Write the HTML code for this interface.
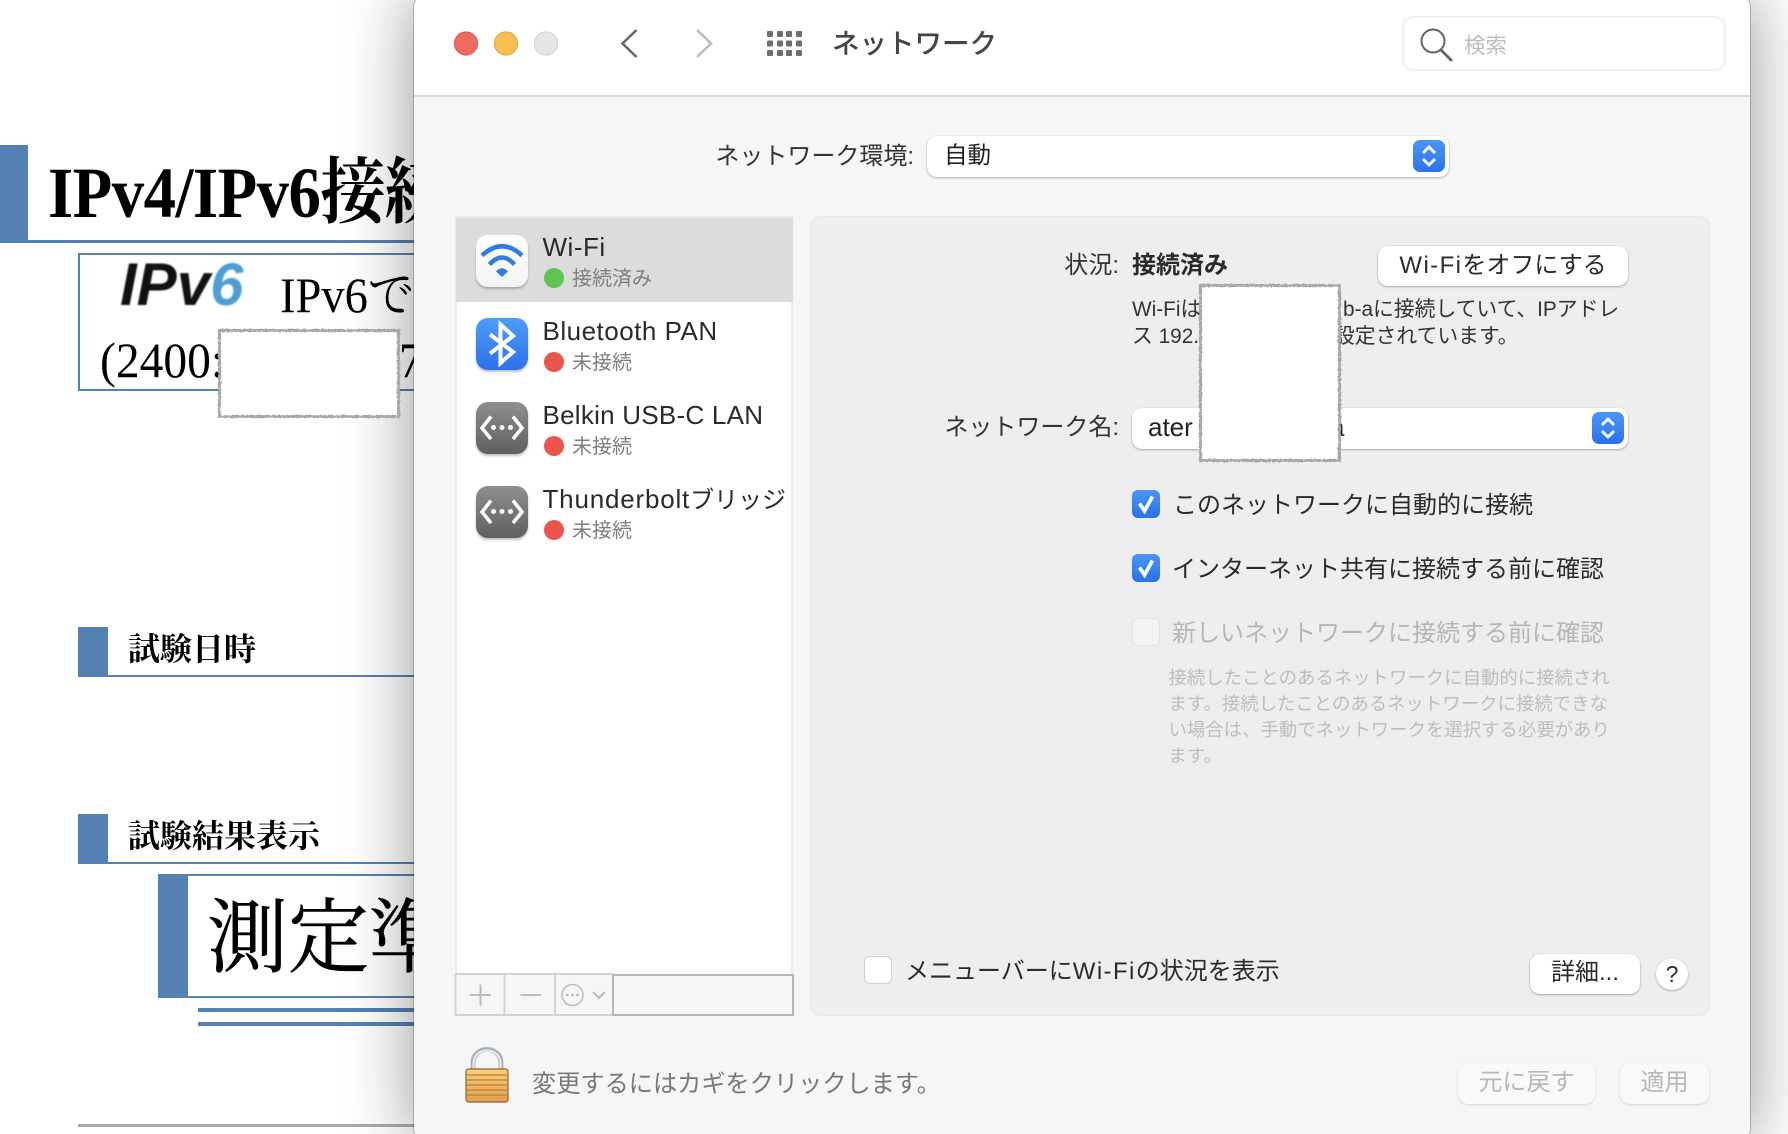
<!DOCTYPE html>
<html lang="ja"><head><meta charset="utf-8"><title>ネットワーク</title>
<style>
html,body{margin:0;padding:0;width:1788px;height:1134px;overflow:hidden;background:#fff}
#root{position:relative;width:1788px;height:1134px;overflow:hidden;background:#fff}
*{box-sizing:border-box}
.a{position:absolute}
.t{position:absolute;white-space:nowrap;line-height:1;font-family:"Liberation Sans","Noto Sans CJK JP",sans-serif;color:#2b2b2b}
.s{position:absolute;white-space:nowrap;line-height:1;font-family:"Liberation Serif","Noto Serif CJK JP",serif;color:#000;transform-origin:0 50%}
.b{background:#5581b2;position:absolute}
.btn{position:absolute;background:#fff;border-radius:10px;box-shadow:0 1px 2px rgba(0,0,0,.28),0 0 1px rgba(0,0,0,.15);text-align:center;font-family:"Liberation Sans","Noto Sans CJK JP",sans-serif;color:#2b2b2b}
.dis{background:#f9f9f9;box-shadow:0 1px 2px rgba(0,0,0,.12),0 0 1px rgba(0,0,0,.1);color:#b7b7b7}
.ico{position:absolute;left:476px;width:52px;height:52px;border-radius:12px;box-shadow:0 2px 2px rgba(0,0,0,.25)}
.gray{background:linear-gradient(#8f8f8f,#5f5f5f)}
.dot{position:absolute;left:544px;width:20px;height:20px;border-radius:50%;background:#e9554b}
.nm{left:542.500px;font-size:26px;letter-spacing:.5px;color:#2a2a2a}
.st{left:572px;font-size:20px;color:#808080}
.red{position:absolute;background:#fff;border:3px solid #a8a8a8;z-index:5;filter:url(#noise)}
.cb{position:absolute;left:1132px;width:28px;height:28px;border-radius:6px;background:linear-gradient(#4c94fb,#2a73ea)}
.step{position:absolute;width:32px;height:32px;border-radius:7px;background:linear-gradient(#4c94fb,#2a73ea)}
.wf{letter-spacing:1.400px}
svg{display:block}
</style></head><body>
<div id="root">
<svg width="0" height="0" style="position:absolute"><filter id="noise" x="-5%" y="-5%" width="110%" height="110%"><feTurbulence type="fractalNoise" baseFrequency=".5" numOctaves="2" seed="3"/><feDisplacementMap in="SourceGraphic" scale="3"/></filter></svg>

<!-- background document -->
<div class="b" style="left:0;top:145px;width:28px;height:98px"></div>
<div class="b" style="left:28px;top:240px;width:400px;height:3px"></div>
<div class="s" style="left:48px;top:157px;font-size:72px;font-weight:bold;letter-spacing:-.6px;transform:scaleX(.9)">IPv4/IPv6接続</div>

<div class="a" style="left:78px;top:253px;width:360px;height:138px;border:2px solid #5581b2"></div>
<div class="t" style="left:120px;top:255px;font-size:60px;font-weight:bold;font-style:italic;color:#111;filter:blur(.8px)">IPv<span style="color:#4d9fd2">6</span></div>
<div class="s" style="left:280px;top:270px;font-size:50px;transform:scaleX(.93)">IPv6で</div>
<div class="s" style="left:100px;top:335px;font-size:50px;transform:scaleX(.95)">(2400:</div>
<div class="s" style="left:399px;top:335px;font-size:50px;transform:scaleX(.92)">7</div>
<div class="red" style="left:218px;top:329px;width:182px;height:89px"></div>

<div class="b" style="left:78px;top:627px;width:30px;height:50px"></div>
<div class="b" style="left:108px;top:675px;width:320px;height:2px"></div>
<div class="s" style="left:128px;top:633px;font-size:32px;font-weight:bold">試験日時</div>

<div class="b" style="left:78px;top:814px;width:30px;height:50px"></div>
<div class="b" style="left:108px;top:862px;width:320px;height:2px"></div>
<div class="s" style="left:128px;top:820px;font-size:32px;font-weight:bold">試験結果表示</div>

<div class="b" style="left:158px;top:874px;width:30px;height:124px"></div>
<div class="b" style="left:188px;top:874px;width:240px;height:2px"></div>
<div class="b" style="left:188px;top:996px;width:240px;height:2px"></div>
<div class="s" style="left:207px;top:899px;font-size:81px;-webkit-text-stroke:.5px #000">測定準</div>
<div class="b" style="left:198px;top:1008px;width:230px;height:4px"></div>
<div class="b" style="left:198px;top:1022px;width:230px;height:4px"></div>
<div class="a" style="left:78px;top:1124px;width:350px;height:3px;background:#aaa"></div>

<!-- window -->
<div class="a" style="left:414px;top:-8px;width:1336px;height:1152px;background:#f6f6f6;border-radius:16px;box-shadow:0 0 70px rgba(0,0,0,.42),0 0 0 1px rgba(0,0,0,.2)"></div>
<div class="a" style="left:414px;top:-8px;width:1336px;height:105px;background:#fff;border-radius:16px 16px 0 0;border-bottom:2px solid #d9d9d9"></div>

<!-- toolbar -->
<svg class="a" style="left:440px;top:0" width="380" height="90">
<circle cx="26" cy="43.5" r="11.6" fill="#ef6b60" stroke="#d9584d" stroke-width="1"/>
<circle cx="66" cy="43.5" r="11.6" fill="#f6bf50" stroke="#dfa23b" stroke-width="1"/>
<circle cx="106" cy="43.5" r="11.6" fill="#e6e6e6" stroke="#cfcfcf" stroke-width="1"/>
<path d="M196.500 30 L182.500 43.500 L196.500 57" fill="none" stroke="#6a6a6a" stroke-width="2.600"/>
<path d="M257 30 L271 43.500 L257 57" fill="none" stroke="#bcbcbc" stroke-width="2.600"/>
<g fill="#6f6f6f">
<rect x="327" y="31" width="6" height="6" rx="1"/><rect x="337" y="31" width="6" height="6" rx="1"/><rect x="346" y="31" width="6" height="6" rx="1"/><rect x="356" y="31" width="6" height="6" rx="1"/>
<rect x="327" y="40.500" width="6" height="6" rx="1"/><rect x="337" y="40.500" width="6" height="6" rx="1"/><rect x="346" y="40.500" width="6" height="6" rx="1"/><rect x="356" y="40.500" width="6" height="6" rx="1"/>
<rect x="327" y="50" width="6" height="6" rx="1"/><rect x="337" y="50" width="6" height="6" rx="1"/><rect x="346" y="50" width="6" height="6" rx="1"/><rect x="356" y="50" width="6" height="6" rx="1"/>
</g></svg>
<div class="t" style="left:832px;top:30px;font-size:27.500px;font-weight:500;color:#454545">ネットワーク</div>
<div class="a" style="left:1402px;top:16px;width:324px;height:55px;background:#fff;border:2px solid #f0f0f0;border-radius:11px"></div>
<svg class="a" style="left:1415px;top:22px" width="44" height="44"><circle cx="18" cy="19" r="11.500" fill="none" stroke="#666" stroke-width="2"/><path d="M26 28 L36 38" stroke="#666" stroke-width="3" stroke-linecap="round"/></svg>
<div class="t" style="left:1464px;top:36px;font-size:21.500px;color:#bcbcbc">検索</div>

<!-- location row -->
<div class="t" style="left:700px;width:214px;text-align:right;top:145px;font-size:24px;color:#333">ネットワーク環境:</div>
<div class="btn" style="left:927px;top:136px;width:522px;height:40.500px"></div>
<div class="t" style="left:944px;top:144px;font-size:23.500px;color:#222">自動</div>
<div class="step" style="left:1413px;top:140px"><svg width="32" height="32"><path d="M10 13 L16 7 L22 13 M10 19 L16 25 L22 19" fill="none" stroke="#fff" stroke-width="2.800"/></svg></div>

<!-- list -->
<div class="a" style="left:455px;top:216px;width:338px;height:759px;background:#fff;border:2px solid #ebebeb;border-bottom:0"></div>
<div class="a" style="left:455.500px;top:218px;width:337px;height:84px;background:#dcdcdc"></div>

<div class="ico" style="top:235px;background:linear-gradient(#fff,#f4f4f4)"><svg width="52" height="52"><path d="M6 20.500 Q26 2 46 20.500" fill="none" stroke="#2f7de1" stroke-width="4.500"/><path d="M13.500 29.500 Q26 15.500 38.500 29.500" fill="none" stroke="#2f7de1" stroke-width="4.500"/><path d="M20 36.500 Q26 30 32 36.500 L26 42 Z" fill="#2f7de1"/></svg></div>
<div class="t nm" style="top:234px">Wi-Fi</div>
<div class="dot" style="top:268px;background:#5fc454"></div>
<div class="t st" style="top:269px">接続済み</div>

<div class="ico" style="top:318px;background:linear-gradient(#4c9df9,#2c72ea)"><svg width="52" height="52"><path d="M14 16.500 L37 34 L24.500 45 V6.500 L37 18 L14 35.500" fill="none" stroke="#fff" stroke-width="4"/></svg></div>
<div class="t nm" style="top:318px">Bluetooth PAN</div>
<div class="dot" style="top:352px"></div>
<div class="t st" style="top:353px">未接続</div>

<div class="ico gray" style="top:402px"><svg width="52" height="52"><path d="M15 14.500 L6 26 L15 37 M37 14.500 L46 26 L37 37" fill="none" stroke="#fff" stroke-width="3.500"/><circle cx="17.500" cy="25.500" r="2.500" fill="#fff"/><circle cx="26" cy="25.500" r="2.500" fill="#fff"/><circle cx="34.500" cy="25.500" r="2.500" fill="#fff"/></svg></div>
<div class="t nm" style="top:402px;letter-spacing:.25px">Belkin USB-C LAN</div>
<div class="dot" style="top:436px"></div>
<div class="t st" style="top:437px">未接続</div>

<div class="ico gray" style="top:486px"><svg width="52" height="52"><path d="M15 14.500 L6 26 L15 37 M37 14.500 L46 26 L37 37" fill="none" stroke="#fff" stroke-width="3.500"/><circle cx="17.500" cy="25.500" r="2.500" fill="#fff"/><circle cx="26" cy="25.500" r="2.500" fill="#fff"/><circle cx="34.500" cy="25.500" r="2.500" fill="#fff"/></svg></div>
<div class="t nm" style="top:486px;letter-spacing:.8px">Thunderbolt<span style="font-size:24px;letter-spacing:0">ブリッジ</span></div>
<div class="dot" style="top:520px"></div>
<div class="t st" style="top:521px">未接続</div>

<!-- list toolbar -->
<svg class="a" style="left:450px;top:970px" width="350" height="50">
<rect x="5" y="4" width="338" height="41" fill="#f6f6f6"/>
<path d="M5.500 4 H163 M5.500 4 V45 H163 M54.500 4 V45 M105 4 V45 M163 4 V45" fill="none" stroke="#d2d2d2" stroke-width="2"/>
<rect x="163" y="5" width="180" height="40" fill="none" stroke="#b6b6b6" stroke-width="2"/>
<path d="M20 25 H41 M30.500 14.500 V35.500 M70.500 25 H91" stroke="#bcbcbc" stroke-width="2" fill="none"/>
<circle cx="122.500" cy="25" r="10.500" fill="none" stroke="#bcbcbc" stroke-width="1.500"/>
<circle cx="117.500" cy="25" r="1.200" fill="#aaa"/><circle cx="122.500" cy="25" r="1.200" fill="#aaa"/><circle cx="127.500" cy="25" r="1.200" fill="#aaa"/>
<path d="M143 22 L149 28 L155 22" fill="none" stroke="#bcbcbc" stroke-width="2.200"/>
</svg>

<!-- lock -->
<svg class="a" style="left:460px;top:1042px" width="56" height="66">
<defs><linearGradient id="lk" x1="0" y1="0" x2="0" y2="1"><stop offset="0" stop-color="#f8d07c"/><stop offset="1" stop-color="#e0a050"/></linearGradient></defs>
<path d="M13 28 V21 C13 3 41 3 41 21 V28" fill="none" stroke="#a9b2ba" stroke-width="5"/>
<path d="M13.500 28 V21 C13.500 4.500 40.500 4.500 40.500 21 V28" fill="none" stroke="#e8ecf0" stroke-width="2"/>
<rect x="6" y="27" width="42" height="33" rx="2.500" fill="url(#lk)" stroke="#985f28" stroke-width="1.200"/>
<path d="M7 33 H47 M7 38 H47 M7 43 H47 M7 48 H47 M7 53 H47" stroke="#bd7f36" stroke-width="1.400" opacity=".85"/>
</svg>
<div class="t" style="left:532px;top:1073px;font-size:24.200px;color:#777">変更するにはカギをクリックします。</div>

<!-- right panel -->
<div class="a" style="left:810px;top:216px;width:900px;height:800px;background:#eeeeee;border:1px solid #e7e7e7;border-radius:10px"></div>

<div class="t" style="left:1000px;width:119px;text-align:right;top:253.500px;font-size:24px;color:#333">状況:</div>
<div class="t" style="left:1132px;top:253.500px;font-size:24px;font-weight:bold;color:#2a2a2a">接続済み</div>
<div class="btn" style="left:1378px;top:246px;width:250px;height:40px;font-size:24px;line-height:39px"><span class="wf">Wi-Fi</span>をオフにする</div>

<div class="t" style="left:1132px;top:299.500px;font-size:20.800px;color:#333">Wi-Fiは</div>
<div class="t" style="left:1343px;top:299.500px;font-size:20.800px;color:#333">b-aに接続していて、IPアドレ</div>
<div class="t" style="left:1132px;top:327px;font-size:20.800px;color:#333">ス 192.</div>
<div class="t" style="left:1334px;top:327px;font-size:20.800px;color:#333">設定されています。</div>

<div class="t" style="left:900px;width:219px;text-align:right;top:415.500px;font-size:24px;color:#333">ネットワーク名:</div>
<div class="btn" style="left:1132px;top:408px;width:496px;height:41px"></div>
<div class="t" style="left:1148px;top:414px;font-size:26px;color:#222">ater</div>
<div class="t" style="left:1330px;top:414px;font-size:26px;color:#222">a</div>
<div class="step" style="left:1592px;top:412px"><svg width="32" height="32"><path d="M10 13 L16 7 L22 13 M10 19 L16 25 L22 19" fill="none" stroke="#fff" stroke-width="2.800"/></svg></div>
<div class="red" style="left:1199px;top:284px;width:142px;height:178px"></div>

<div class="cb" style="top:490px"><svg width="28" height="28"><path d="M7.500 13.500 L12.500 21 L20.500 6.500" fill="none" stroke="#fff" stroke-width="3.600"/></svg></div>
<div class="t" style="left:1173px;top:494px;font-size:24px;color:#2b2b2b">このネットワークに自動的に接続</div>
<div class="cb" style="top:554px"><svg width="28" height="28"><path d="M7.500 13.500 L12.500 21 L20.500 6.500" fill="none" stroke="#fff" stroke-width="3.600"/></svg></div>
<div class="t" style="left:1172px;top:558px;font-size:24px;color:#2b2b2b">インターネット共有に接続する前に確認</div>
<div class="a" style="left:1132px;top:618px;width:28px;height:28px;border-radius:6px;background:#f3f3f3;border:1px solid #e2e2e2"></div>
<div class="t" style="left:1172px;top:622px;font-size:24px;color:#b6b6b6">新しいネットワークに接続する前に確認</div>

<div class="t" style="left:1168.500px;top:669px;font-size:18.400px;color:#bdbdbd">接続したことのあるネットワークに自動的に接続され</div>
<div class="t" style="left:1168.500px;top:695px;font-size:18.400px;color:#bdbdbd">ます。接続したことのあるネットワークに接続できな</div>
<div class="t" style="left:1168.500px;top:721px;font-size:18.400px;color:#bdbdbd">い場合は、手動でネットワークを選択する必要があり</div>
<div class="t" style="left:1168.500px;top:747px;font-size:18.400px;color:#bdbdbd">ます。</div>

<div class="a" style="left:864px;top:956px;width:28px;height:28px;border-radius:6px;background:#fff;border:1px solid #cfcfcf"></div>
<div class="t" style="left:905px;top:960px;font-size:24px;color:#2b2b2b">メニューバーに<span class="wf">Wi-Fi</span>の状況を表示</div>
<div class="btn" style="left:1530px;top:954px;width:110px;height:40px;font-size:24px;line-height:38px">詳細...</div>
<div class="btn" style="left:1656px;top:958px;width:32px;height:32px;border-radius:50%;font-size:23px;line-height:32px">?</div>

<div class="btn dis" style="left:1458px;top:1063px;width:137px;height:41px;font-size:24px;line-height:39px">元に戻す</div>
<div class="btn dis" style="left:1620px;top:1063px;width:89px;height:41px;font-size:24px;line-height:39px">適用</div>
</div>
</body></html>
